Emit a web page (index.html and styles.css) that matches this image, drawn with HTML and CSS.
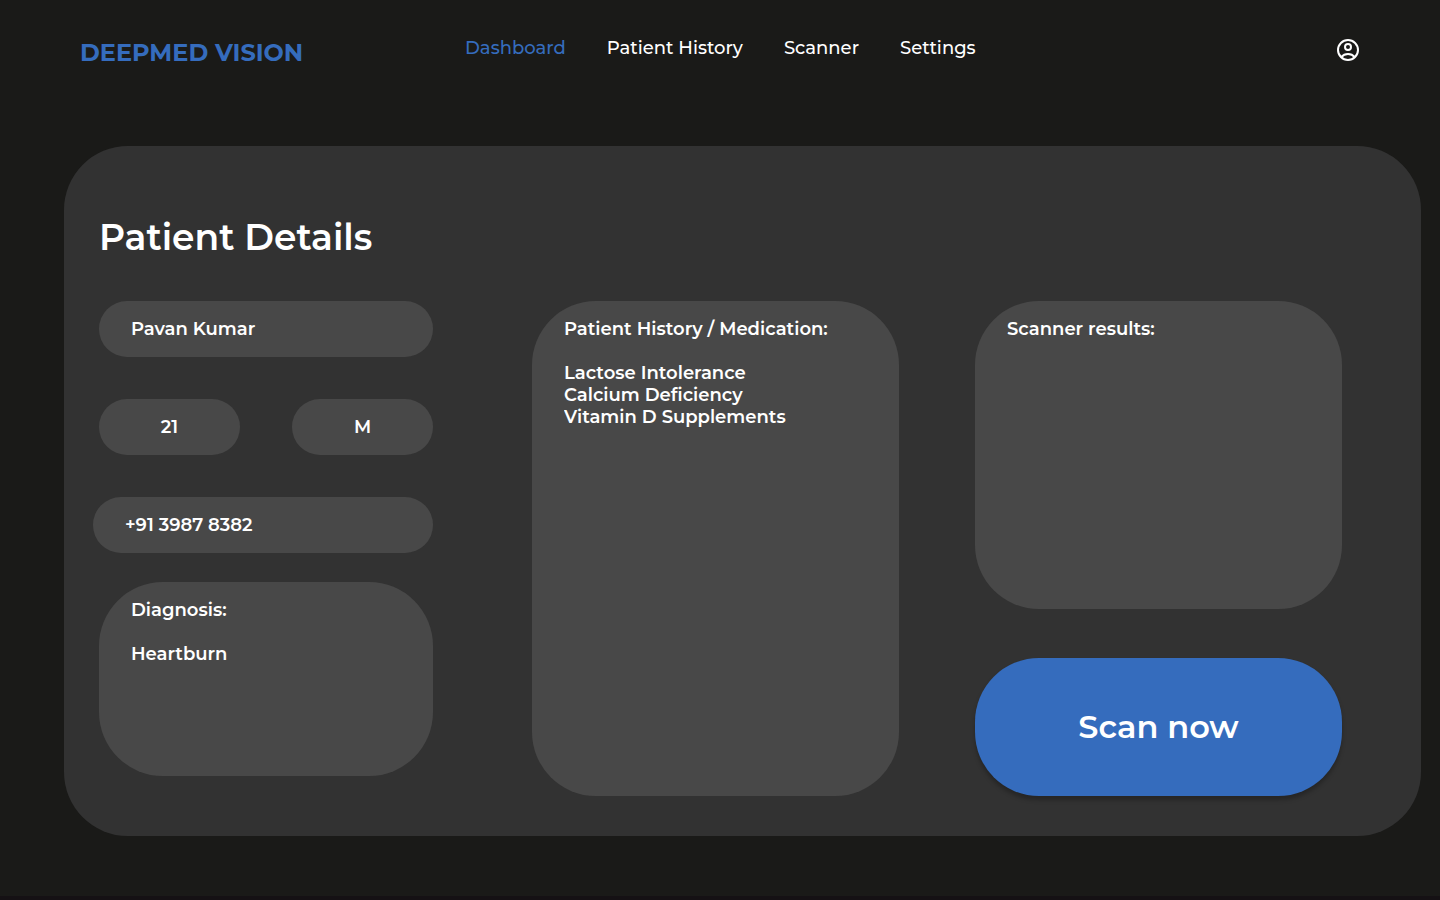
FILE: index.html
```html
<!DOCTYPE html>
<html lang="en">
<head>
<meta charset="utf-8">
<meta name="viewport" content="width=device-width, initial-scale=1">
<title>DeepMed Vision</title>
<link rel="stylesheet" href="styles.css">
</head>
<body>
<header class="topbar">
  <a class="brand" href="#">DEEPMED VISION</a>
  <nav class="nav" aria-label="Main">
    <a class="nav-link active" href="#" aria-current="page">Dashboard</a>
    <a class="nav-link" href="#">Patient History</a>
    <a class="nav-link" href="#">Scanner</a>
    <a class="nav-link" href="#">Settings</a>
  </nav>
  <button class="account" type="button" aria-label="Account">
    <svg viewBox="0 0 24 24" width="24" height="24" fill="none" stroke="currentColor" stroke-width="2" aria-hidden="true">
      <circle cx="12" cy="12" r="10"/>
      <circle cx="12" cy="9" r="3"/>
      <path d="M5.300 19C6.900 17.100 9.300 16 12 16s5.100 1.100 6.700 3"/>
    </svg>
  </button>
</header>
<main class="panel">
  <h1 class="title">Patient Details</h1>
  <form class="columns">
    <div class="details">
      <input class="field" type="text" aria-label="Name" value="Pavan Kumar">
      <div class="pair">
        <input class="field short" type="text" aria-label="Age" value="21">
        <input class="field short" type="text" aria-label="Sex" value="M">
      </div>
      <input class="field phone" type="tel" aria-label="Phone" value="+91 3987 8382">
      <div class="card diagnosis">
        <label class="card-label" for="diagnosis">Diagnosis:</label>
        <textarea class="card-text" id="diagnosis">Heartburn</textarea>
      </div>
    </div>
    <div class="card history">
      <label class="card-label" for="history">Patient History / Medication:</label>
      <textarea class="card-text" id="history">Lactose Intolerance
Calcium Deficiency
Vitamin D Supplements</textarea>
    </div>
    <div class="scan">
      <div class="card results">
        <label class="card-label" for="results">Scanner results:</label>
        <textarea class="card-text" id="results" readonly></textarea>
      </div>
      <button class="scan-button" type="button">Scan now</button>
    </div>
  </form>
</main>
</body>
</html>
```

FILE: styles.css
```css
* {
  box-sizing: border-box;
}

body {
  margin: 0;
  min-height: 100vh;
  background: #1a1a18;
  border-bottom: 4px solid #151114;
  color: #fff;
  font-family: Montserrat, Inter, sans-serif;
  font-size: 18px;
  line-height: 22px;
}

input,
textarea,
button {
  margin: 0;
  border: 0;
  color: inherit;
  font: inherit;
}

.topbar {
  display: grid;
  grid-template-columns: 385px 1fr auto;
  align-items: start;
  padding: 37px 80px 0;
  height: 146px;
}

.brand {
  padding-top: 1px;
  color: #356cbd;
  font-size: 24px;
  font-weight: 700;
  line-height: 30px;
  text-decoration: none;
}

.nav {
  display: flex;
  gap: 41px;
}

.nav-link {
  color: #fff;
  font-weight: 500;
  text-decoration: none;
}

.nav-link.active {
  color: #356cbd;
}

.account {
  display: flex;
  padding: 1px 0;
  background: none;
}

.panel {
  margin: 0 19px 0 64px;
  padding: 69px 79px 40px 35px;
  border-radius: 64px;
  background: #323232;
}

.title {
  margin: 0 0 42px;
  font-size: 36px;
  font-weight: 600;
  line-height: 44px;
}

.columns {
  display: grid;
  grid-template-columns: 433fr 443fr 367fr;
  font-weight: 600;
}

.details {
  display: flex;
  flex-direction: column;
  gap: 42px;
  margin-right: 99px;
}

.field {
  width: 100%;
  height: 56px;
  padding: 0 32px;
  border-radius: 28px;
  background: #484848;
}

.pair {
  display: grid;
  grid-template-columns: 1fr 1fr;
  gap: 52px;
}

.short {
  text-align: center;
}

.phone {
  width: auto;
  margin-left: -6px;
}

.card {
  display: flex;
  flex-direction: column;
  gap: 22px;
  padding: 17px 32px;
  border-radius: 64px;
  background: #484848;
}

.card-text {
  flex: 1;
  width: 100%;
  min-height: 0;
  padding: 0;
  background: none;
  resize: none;
}

.diagnosis {
  height: 194px;
  margin-top: -13px;
}

.history {
  min-height: 495px;
  margin-right: 76px;
}

.scan {
  display: flex;
  flex-direction: column;
  gap: 49px;
}

.results {
  flex: 1;
}

.scan-button {
  height: 138px;
  border-radius: 64px;
  background: #356cbd;
  box-shadow: 0 4px 4px rgba(0, 0, 0, 0.25);
  font-size: 32px;
  font-weight: 600;
}
```
